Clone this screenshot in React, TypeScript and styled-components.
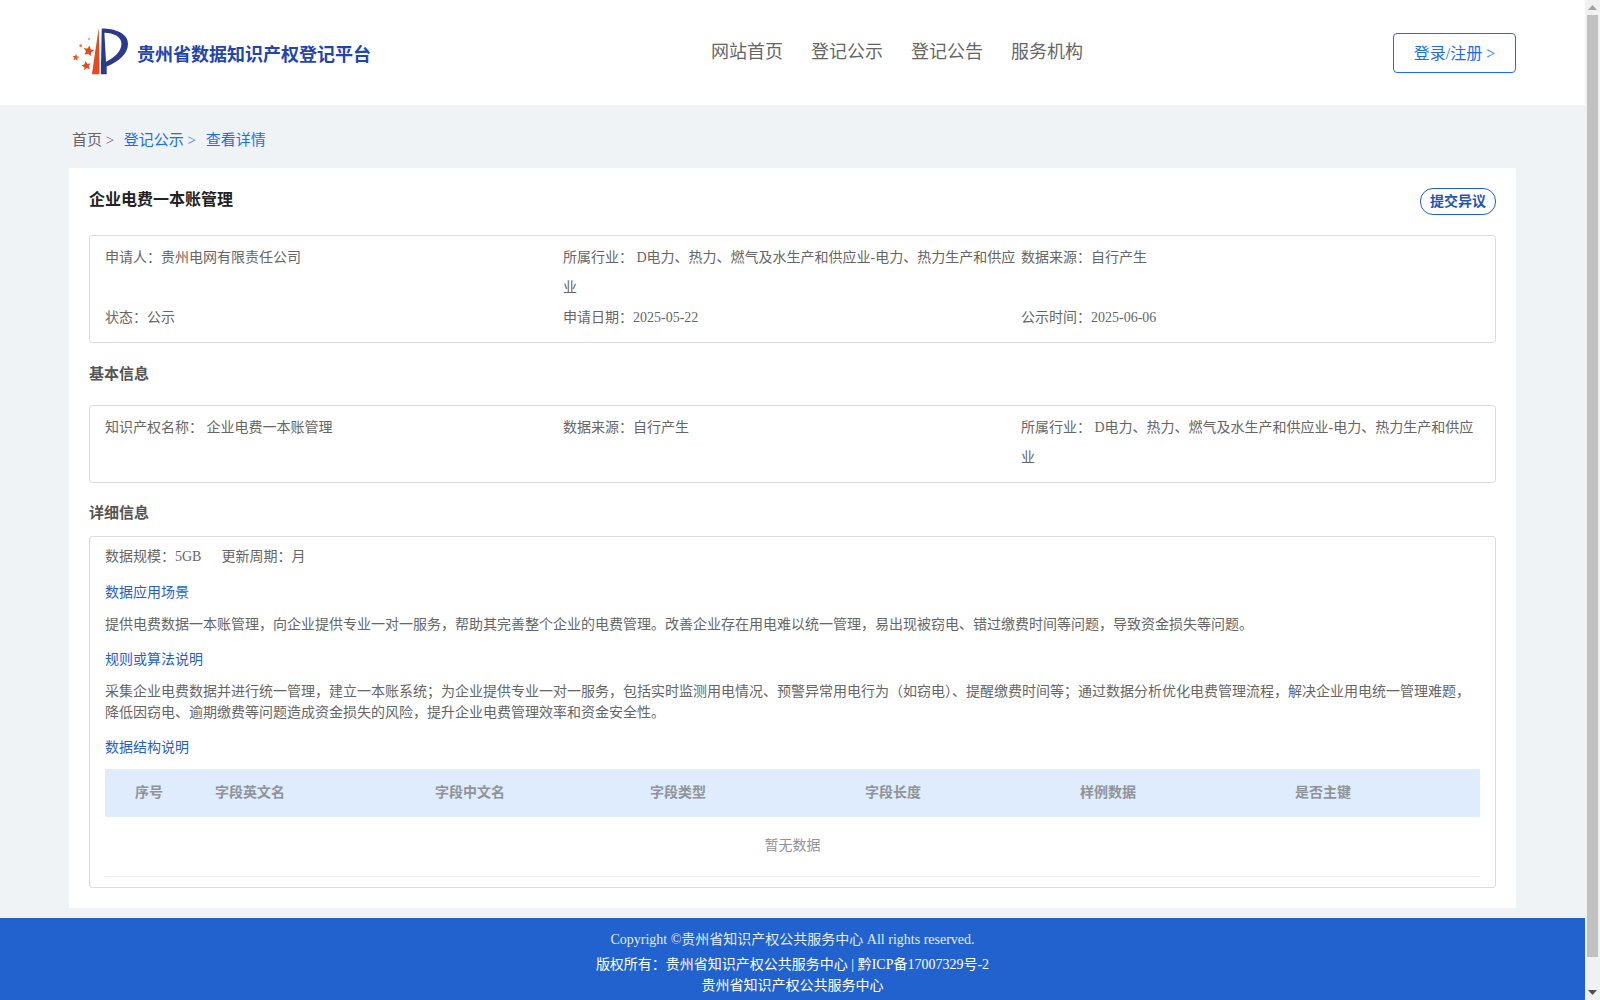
import React from 'react';
import styled, { createGlobalStyle } from 'styled-components';

const GlobalStyle = createGlobalStyle`
    body {
        margin: 0;
        background: #eff3f6;
        font-family: "Liberation Serif", "Noto Sans CJK SC", serif;
        font-size: 14px;
        color: #666;
    }

    * {
        box-sizing: border-box;
    }
`;

const Shell = styled.div`
    display: flex;
    height: 100vh;
    overflow: hidden;
`;

const Content = styled.div`
    flex: 1;
    min-width: 0;
`;

const ScrollBar = styled.aside`
    display: flex;
    flex-direction: column;
    align-items: center;
    flex: none;
    width: 15px;
    background: #f1f1f1;
`;

const ScrollArrow = styled.div`
    display: flex;
    align-items: center;
    justify-content: center;
    flex: none;
    height: 15px;
`;

const ScrollThumb = styled.div`
    flex: none;
    width: 11px;
    height: 942px;
    background: #c1c1c1;
`;

const ScrollSpacer = styled.div`
    flex: 1;
`;

const Header = styled.header`
    display: flex;
    align-items: center;
    height: 105px;
    padding: 0 69px 0 65px;
    background: #fff;
`;

const Brand = styled.div`
    display: flex;
    align-items: center;
    gap: 8px;
    width: 306px;
`;

const BrandName = styled.h1`
    margin: 1px 0 0;
    font-size: 18px;
    font-weight: 700;
    white-space: nowrap;
    color: #1f45b0;
`;

const Nav = styled.nav`
    display: flex;
    gap: 28px;
    margin: 0 0 6px 340px;
`;

const NavItem = styled.a`
    font-size: 18px;
    color: #666;
`;

const LoginButton = styled.button`
    width: 123px;
    height: 40px;
    margin: 1px 0 0 auto;
    padding: 0 0 2px;
    font: inherit;
    font-size: 16px;
    color: #1a6eee;
    background: #fff;
    border: 1px solid #1a6eee;
    border-radius: 4px;
`;

const Page = styled.main`
    padding: 0 69px 10px;
`;

const Crumbs = styled.div`
    display: flex;
    align-items: center;
    height: 63px;
    padding: 4px 0 0 3px;
    font-size: 15px;
`;

const Crumb = styled.span<{ $active?: boolean }>`
    margin-right: 9.6px;
    color: ${props => (props.$active ? '#1a6eee' : '#666')};
`;

const Card = styled.section`
    padding: 20px;
    background: #fff;
`;

const TitleRow = styled.div`
    display: flex;
    align-items: flex-start;
    justify-content: space-between;
    height: 47px;
`;

const Title = styled.h2`
    margin: 1px 0 0;
    font-size: 16px;
    font-weight: 700;
    line-height: 22px;
    color: #222;
`;

const ObjectionButton = styled.button`
    width: 76px;
    height: 27px;
    padding: 0 0 3px;
    font: inherit;
    font-size: 14px;
    font-weight: 700;
    color: #1e54b8;
    background: #fff;
    border: 1px solid #1f5fcc;
    border-radius: 13px;
`;

const InfoBox = styled.div`
    display: grid;
    grid-template-columns: repeat(3, 458px);
    padding: 7px 15px 9px;
    line-height: 30px;
    border: 1px solid #ddd;
    border-radius: 3px;
`;

const InfoCell = styled.div`
    padding-right: 4px;
`;

const SectionTitle = styled.h3`
    display: flex;
    align-items: center;
    height: 62px;
    margin: 0;
    padding-bottom: 4px;
    font-size: 15px;
    font-weight: 700;
    color: #555;
`;

const DetailTitle = styled(SectionTitle)`
    height: 53px;
    padding: 3px 0 0;
`;

const DetailBox = styled.div`
    padding: 9px 15px 10px;
    line-height: 21px;
    border: 1px solid #ddd;
    border-radius: 3px;
`;

const Meta = styled.div`
    display: flex;
    gap: 20px;
`;

const Subheading = styled.h4<{ $top: number }>`
    margin: ${props => props.$top}px 0 0;
    font-size: 14px;
    font-weight: 400;
    color: #1f5fcc;
`;

const Paragraph = styled.p`
    margin: 10.5px 0 0;
`;

const Table = styled.div`
    margin-top: 11px;
    border-bottom: 1px solid #ebeef5;
`;

const TableHead = styled.div`
    display: grid;
    grid-template-columns: 110px 220px 215px 215px 215px 215px 1fr;
    align-items: center;
    height: 48px;
    padding-bottom: 2px;
    font-weight: 700;
    color: #909399;
    background: #dfecfd;
`;

const HeadCell = styled.div<{ $inset?: boolean }>`
    padding-left: ${props => (props.$inset ? '30px' : '0')};
`;

const EmptyRow = styled.div`
    display: flex;
    align-items: center;
    justify-content: center;
    height: 59px;
    padding-bottom: 2px;
    color: #909399;
`;

const Footer = styled.footer`
    height: 112px;
    padding-top: 11px;
    text-align: center;
    color: #fff;
    background: #2162cf;
`;

const FooterLine = styled.div<{ $height: number; $muted?: boolean }>`
    height: ${props => props.$height}px;
    line-height: ${props => props.$height}px;
    color: ${props => (props.$muted ? '#e3ebf8' : '#fff')};
`;

// five-pointed star for the logo, in viewBox units
const starPoints = (cx: number, cy: number, r: number, turn: number) =>
    Array.from({ length: 10 }, (_, i) => {
        const radius = i % 2 === 0 ? r : r * 0.48;
        const angle = turn + (i * Math.PI) / 5 - Math.PI / 2;
        return `${cx + radius * Math.cos(angle)},${cy + radius * Math.sin(angle)}`;
    }).join(' ');

const Logo = () => (
    <svg width="65" height="60" viewBox="0 0 195 180" aria-hidden="true">
        <path d="M103 12 L82 155 L105 155 Z" fill="#e8481a" />
        <path
            fillRule="evenodd"
            d="M112 15 C150 15 192 28 192 62 C192 95 160 118 127 131 L127 155 L109 155 Z M120 28 L125 117 C148 104 172 88 172 62 C172 40 148 28 120 28 Z"
            fill="#2a3a8f"
        />
        <polygon points={starPoints(72, 84, 17, 0.2)} fill="#e8481a" />
        <polygon points={starPoints(65, 129, 15, -0.2)} fill="#e8481a" />
        <polygon points={starPoints(33, 104, 11, 0.1)} fill="#ea5a30" />
        <circle cx="48" cy="68" r="4.5" fill="#ee7a50" />
        <circle cx="73" cy="47" r="3.5" fill="#f2a184" />
    </svg>
);

const NAV = ['网站首页', '登记公示', '登记公告', '服务机构'];
const COLUMNS = ['序号', '字段英文名', '字段中文名', '字段类型', '字段长度', '样例数据', '是否主键'];
const INDUSTRY = '所属行业： D电力、热力、燃气及水生产和供应业-电力、热力生产和供应业';

export default function App() {
    return (
        <>
            <GlobalStyle />
            <Shell>
                <Content>
                    <Header>
                        <Brand>
                            <Logo />
                            <BrandName>贵州省数据知识产权登记平台</BrandName>
                        </Brand>
                        <Nav>
                            {NAV.map(item => <NavItem key={item}>{item}</NavItem>)}
                        </Nav>
                        <LoginButton>登录/注册 &gt;</LoginButton>
                    </Header>
                    <Page>
                        <Crumbs>
                            <Crumb>首页 &gt;</Crumb>
                            <Crumb $active>登记公示 &gt;</Crumb>
                            <Crumb $active>查看详情</Crumb>
                        </Crumbs>
                        <Card>
                            <TitleRow>
                                <Title>企业电费一本账管理</Title>
                                <ObjectionButton>提交异议</ObjectionButton>
                            </TitleRow>
                            <InfoBox>
                                <InfoCell>申请人：贵州电网有限责任公司</InfoCell>
                                <InfoCell>{INDUSTRY}</InfoCell>
                                <InfoCell>数据来源：自行产生</InfoCell>
                                <InfoCell>状态：公示</InfoCell>
                                <InfoCell>申请日期：2025-05-22</InfoCell>
                                <InfoCell>公示时间：2025-06-06</InfoCell>
                            </InfoBox>
                            <SectionTitle>基本信息</SectionTitle>
                            <InfoBox>
                                <InfoCell>知识产权名称： 企业电费一本账管理</InfoCell>
                                <InfoCell>数据来源：自行产生</InfoCell>
                                <InfoCell>{INDUSTRY}</InfoCell>
                            </InfoBox>
                            <DetailTitle>详细信息</DetailTitle>
                            <DetailBox>
                                <Meta>
                                    <span>数据规模：5GB</span>
                                    <span>更新周期：月</span>
                                </Meta>
                                <Subheading $top={15}>数据应用场景</Subheading>
                                <Paragraph>提供电费数据一本账管理，向企业提供专业一对一服务，帮助其完善整个企业的电费管理。改善企业存在用电难以统一管理，易出现被窃电、错过缴费时间等问题，导致资金损失等问题。</Paragraph>
                                <Subheading $top={14.5}>规则或算法说明</Subheading>
                                <Paragraph>采集企业电费数据并进行统一管理，建立一本账系统；为企业提供专业一对一服务，包括实时监测用电情况、预警异常用电行为（如窃电）、提醒缴费时间等；通过数据分析优化电费管理流程，解决企业用电统一管理难题，降低因窃电、逾期缴费等问题造成资金损失的风险，提升企业电费管理效率和资金安全性。</Paragraph>
                                <Subheading $top={14.5}>数据结构说明</Subheading>
                                <Table>
                                    <TableHead>
                                        {COLUMNS.map((col, i) => <HeadCell key={col} $inset={i === 0}>{col}</HeadCell>)}
                                    </TableHead>
                                    <EmptyRow>暂无数据</EmptyRow>
                                </Table>
                            </DetailBox>
                        </Card>
                    </Page>
                    <Footer>
                        <FooterLine $height={21} $muted>Copyright ©贵州省知识产权公共服务中心 All rights reserved.</FooterLine>
                        <FooterLine $height={30}>版权所有：贵州省知识产权公共服务中心 | 黔ICP备17007329号-2</FooterLine>
                        <FooterLine $height={12}>贵州省知识产权公共服务中心</FooterLine>
                    </Footer>
                </Content>
                <ScrollBar>
                    <ScrollArrow>
                        <svg width="9" height="5" viewBox="0 0 9 5"><path d="M4.5 0 L9 5 L0 5 Z" fill="#a3a3a3" /></svg>
                    </ScrollArrow>
                    <ScrollThumb />
                    <ScrollSpacer />
                    <ScrollArrow>
                        <svg width="9" height="5" viewBox="0 0 9 5"><path d="M0 0 L9 0 L4.5 5 Z" fill="#505050" /></svg>
                    </ScrollArrow>
                </ScrollBar>
            </Shell>
        </>
    );
}
